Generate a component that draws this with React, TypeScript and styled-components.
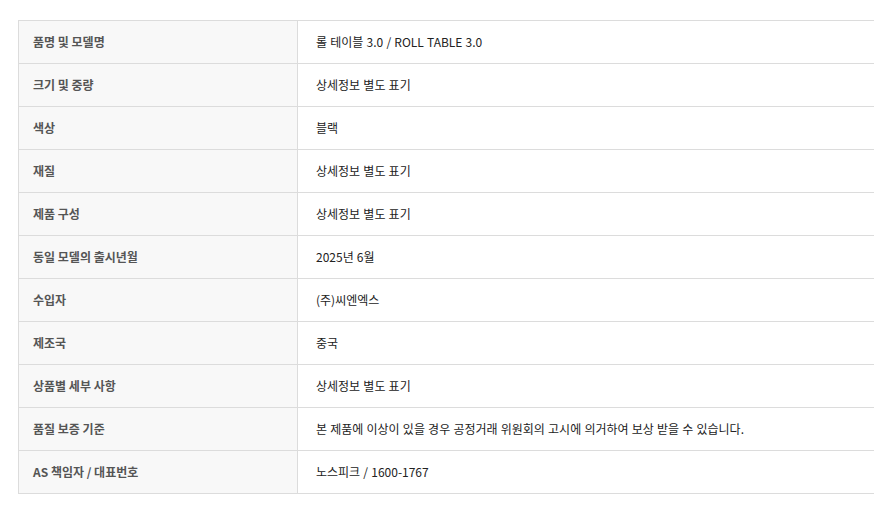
import React from 'react';
import styled, {createGlobalStyle} from 'styled-components';

interface ISpecRow {
  label: string;
  value: string;
}

const SPECS: ISpecRow[] = [
  {label: '품명 및 모델명', value: '롤 테이블 3.0 / ROLL TABLE 3.0'},
  {label: '크기 및 중량', value: '상세정보 별도 표기'},
  {label: '색상', value: '블랙'},
  {label: '재질', value: '상세정보 별도 표기'},
  {label: '제품 구성', value: '상세정보 별도 표기'},
  {label: '동일 모델의 출시년월', value: '2025년 6월'},
  {label: '수입자', value: '(주)씨엔엑스'},
  {label: '제조국', value: '중국'},
  {label: '상품별 세부 사항', value: '상세정보 별도 표기'},
  {
    label: '품질 보증 기준',
    value: '본 제품에 이상이 있을 경우 공정거래 위원회의 고시에 의거하여 보상 받을 수 있습니다.'
  },
  {label: 'AS 책임자 / 대표번호', value: '노스피크 / 1600-1767'}
];

const GlobalStyle = createGlobalStyle`
  html, body {
    margin: 0;
    padding: 0;
    background: #fff;
  }
  body {
    font-family: 'Noto Sans CJK KR', 'Noto Sans', sans-serif;
  }
`;

const Page = styled.div`
  padding: 20px 0 0 18px;
`;

// the table runs to the window's right edge, so no right border shows
const SpecTable = styled.table`
  width: 100%;
  border-collapse: collapse;
  border-top: 1px solid #dcdcdc;
  border-left: 1px solid #dcdcdc;
  table-layout: fixed;
`;

const Row = styled.tr`
  height: 43px;
  border-bottom: 1px solid #dcdcdc;
`;

const Label = styled.th`
  width: 279px;
  box-sizing: border-box;
  padding: 0 0 2px 14px;
  background: #f8f8f8;
  border-right: 1px solid #dcdcdc;
  text-align: left;
  vertical-align: middle;
  font-size: 12px;
  font-weight: 700;
  color: #555;
`;

const Value = styled.td`
  padding: 0 0 2px 18px;
  vertical-align: middle;
  font-size: 12px;
  font-weight: 400;
  color: #222;
  word-spacing: 0.5px;
`;

const App = () => {
  return (
    <Page>
      <GlobalStyle />
      <SpecTable>
        <tbody>
          {SPECS.map((spec) => (
            <Row key={spec.label}>
              <Label>{spec.label}</Label>
              <Value>{spec.value}</Value>
            </Row>
          ))}
        </tbody>
      </SpecTable>
    </Page>
  );
};

export default App;
